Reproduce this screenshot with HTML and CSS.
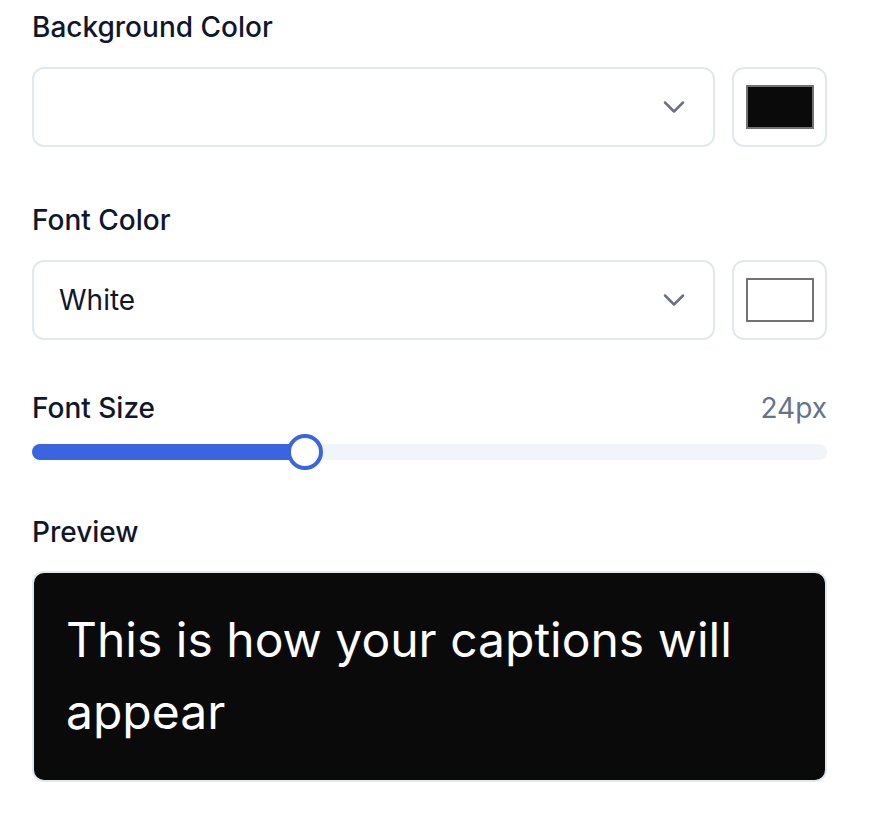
FILE: index.html
```html
<!DOCTYPE html>
<html lang="en">
<head>
  <meta charset="UTF-8" />
  <title>Caption Style</title>
  <link rel="stylesheet" href="styles.css">
</head>
<body>

  <div class="panel">

    <!-- Background colour -->
    <div class="field">
      <label class="label">Background Color</label>
      <div class="picker-row">
        <div class="select">
          <span class="select-value"></span>
          <svg class="chevron" width="36" height="36" viewBox="0 0 24 24" fill="none" stroke="#6b7280" stroke-width="1.7" stroke-linecap="round" stroke-linejoin="round"><polyline points="6 9 12 15 18 9"></polyline></svg>
        </div>
        <div class="swatch-btn"><span class="swatch swatch-black"></span></div>
      </div>
    </div>

    <!-- Font colour -->
    <div class="field field-font">
      <label class="label">Font Color</label>
      <div class="picker-row">
        <div class="select">
          <span class="select-value">White</span>
          <svg class="chevron" width="36" height="36" viewBox="0 0 24 24" fill="none" stroke="#6b7280" stroke-width="1.7" stroke-linecap="round" stroke-linejoin="round"><polyline points="6 9 12 15 18 9"></polyline></svg>
        </div>
        <div class="swatch-btn"><span class="swatch swatch-white"></span></div>
      </div>
    </div>

    <!-- Font size -->
    <div class="field field-size">
      <div class="label-row">
        <label class="label">Font Size</label>
        <span class="value">24px</span>
      </div>
      <div class="slider">
        <div class="track">
          <div class="fill" style="width: 34.3%"></div>
        </div>
        <span class="thumb" style="left: 34.3%"></span>
      </div>
    </div>

    <!-- Preview -->
    <div class="field field-preview">
      <label class="label">Preview</label>
      <div class="preview">
        <p>This is how your captions will appear</p>
      </div>
    </div>

  </div>

</body>
</html>
```

FILE: styles.css
```css
body {
  margin: 0;
  background: #fff;
  font-family: Inter, "Noto Sans", sans-serif;
  color: #0f172a;
}
.panel {
  width: 795px;
  padding: 7px 0 0 32px;
}
.label {
  display: block;
  font-size: 28px;
  font-weight: 500;
  line-height: 40px;
  margin-bottom: 20px;
}
.picker-row {
  display: flex;
  gap: 17px;
}
.select {
  flex: 1;
  height: 80px;
  box-sizing: border-box;
  border: 2px solid #e2e8f0;
  border-radius: 12px;
  display: flex;
  align-items: center;
  justify-content: space-between;
  padding: 0 21px 0 25px;
}
.select-value {
  font-size: 28px;
  line-height: 40px;
}
.swatch-btn {
  width: 95px;
  height: 80px;
  box-sizing: border-box;
  border: 2px solid #e2e8f0;
  border-radius: 12px;
  display: flex;
  align-items: center;
  justify-content: center;
}
.swatch {
  width: 68px;
  height: 44px;
  box-sizing: border-box;
  border: 2px solid #737373;
}
.swatch-black {
  background: #0a0a0a;
}
.swatch-white {
  background: #fff;
}
.field-font {
  margin-top: 53px;
}
.field-size {
  margin-top: 48px;
}
.label-row {
  display: flex;
  justify-content: space-between;
  align-items: center;
}
.label-row .label {
  margin-bottom: 0;
}
.value {
  font-size: 28px;
  line-height: 40px;
  color: #64748b;
}
.slider {
  position: relative;
  height: 36px;
  margin-top: 6px;
  display: flex;
  align-items: center;
}
.track {
  width: 100%;
  height: 16px;
  border-radius: 8px;
  background: #f1f5f9;
  overflow: hidden;
}
.fill {
  height: 100%;
  background: #3b65e0;
}
.thumb {
  position: absolute;
  top: 0;
  width: 36px;
  height: 36px;
  box-sizing: border-box;
  margin-left: -18px;
  border-radius: 50%;
  border: 4px solid #3b65e0;
  background: #fff;
}
.field-preview {
  margin-top: 42px;
}
.field-preview .label {
  margin-bottom: 19px;
}
.preview {
  background: #0a0a0a;
  border: 2px solid #e2e8f0;
  border-radius: 12px;
  padding: 31px 32px 32px;
}
.preview p {
  margin: 0;
  font-family: Inter, "Liberation Sans", sans-serif;
  font-size: 48px;
  line-height: 72px;
  color: #fff;
}
```
